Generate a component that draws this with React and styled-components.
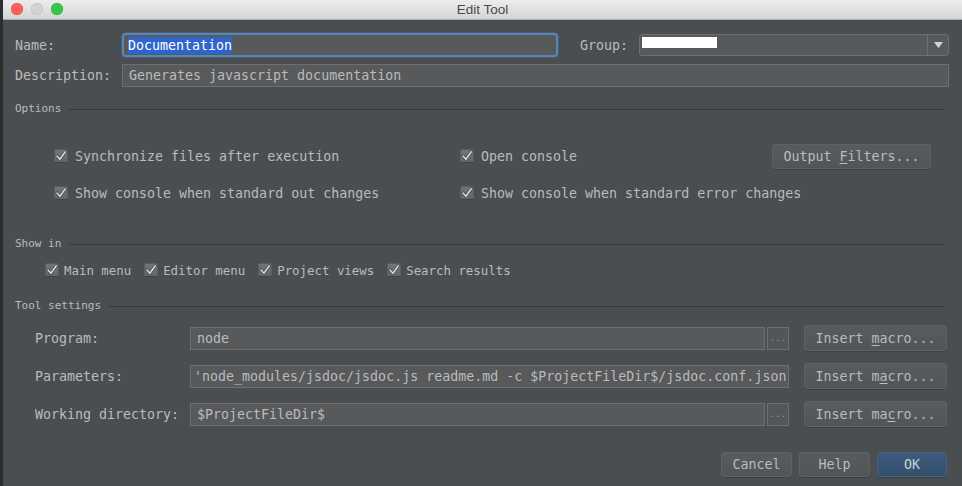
import React from 'react';
import styled, { createGlobalStyle } from 'styled-components';

const GlobalStyle = createGlobalStyle`
  html, body {
    margin: 0;
    padding: 0;
    background: #2b2d2e;
  }
  body {
    font-family: "DejaVu Sans Mono", "Liberation Mono", monospace;
  }
`;

const Screen = styled.div`
  width: 962px;
  height: 486px;
  display: flex;
  overflow: hidden;
  background: #2b2d2e;
`;

const Window = styled.div`
  margin-left: 3px;
  flex: 1;
  min-width: 0;
  display: flex;
  flex-direction: column;
  background: #4b4e50;
  color: #bbbbbb;
  font-size: 13.3px;
`;

const TitleBar = styled.div`
  height: 19px;
  flex: 0 0 19px;
  position: relative;
  display: flex;
  align-items: center;
  justify-content: center;
  background: linear-gradient(#ececec, #d5d5d5);
  border-bottom: 1px solid #a9a9a9;
  font-family: "Liberation Sans", Arial, sans-serif;
  font-size: 13.5px;
  color: #4a4a4a;
`;

const Lights = styled.div`
  position: absolute;
  left: 8px;
  top: 3px;
  display: flex;
  gap: 8px;
`;

const Light = styled.span`
  width: 12px;
  height: 12px;
  border-radius: 50%;
  background: ${p => p.color};
  box-shadow: inset 0 0 0 0.5px ${p => p.edge};
`;

const Body = styled.div`
  flex: 1;
  min-width: 0;
  display: flex;
  flex-direction: column;
  padding: 0 13px 0 12px;
`;

const FieldRow = styled.div`
  display: flex;
  align-items: center;
  height: ${p => p.h || 23}px;
  margin-top: ${p => p.mt || 0}px;
  min-width: 0;
`;

const Label = styled.div`
  flex: 0 0 ${p => p.w}px;
  margin-left: ${p => p.ml || 0}px;
  white-space: nowrap;
`;

const TextBox = styled.div`
  box-sizing: border-box;
  flex: ${p => (p.w ? `0 0 ${p.w}px` : '1 1 0')};
  min-width: 0;
  height: ${p => p.h || 23}px;
  display: flex;
  align-items: center;
  padding: 0 6px;
  background: #57595b;
  border: 1px solid #6d7072;
  color: #bbbbbb;
  white-space: nowrap;
  overflow: hidden;
`;

const FocusBox = styled(TextBox)`
  border: 2px solid #5b85b3;
  border-radius: 4px;
  padding: 0 4px;
  box-shadow: 0 0 0 1px #46607c;
`;

const Selected = styled.span`
  background: #2f65ca;
  color: #ffffff;
  line-height: 17px;
`;

const Combo = styled.div`
  box-sizing: border-box;
  flex: 1 1 0;
  min-width: 0;
  height: 22px;
  display: flex;
  background: #57595b;
  border: 1px solid #6d7072;
  border-radius: 3px;
`;

const ComboValue = styled.div`
  flex: 1;
  padding: 2px 0 0 2px;
`;

const Redacted = styled.div`
  width: 75px;
  height: 11px;
  background: #ffffff;
`;

const ComboArrow = styled.div`
  flex: 0 0 20px;
  border-left: 1px solid #6d7072;
  display: flex;
  align-items: center;
  justify-content: center;
`;

const SectionTitle = styled.div`
  display: flex;
  align-items: center;
  height: 14px;
  margin-top: ${p => p.mt}px;
  font-size: 11px;
  margin-right: 4px;

  &::after {
    content: '';
    flex: 1;
    height: 1px;
    margin: 3px 0 0 8px;
    background: #36383a;
  }
`;

const OptionsGrid = styled.div`
  display: grid;
  grid-template-columns: 406px minmax(0, 1fr) auto;
  grid-auto-rows: 26px;
  row-gap: 11px;
  align-items: center;
  margin-top: 28px;
  padding: 0 18px 0 39px;
`;

const ShowInRow = styled.div`
  display: flex;
  align-items: center;
  height: 20px;
  margin-top: 10px;
  padding-left: 30px;
  gap: 13px;
  font-size: 12.4px;
`;

const Check = styled.label`
  display: flex;
  align-items: center;
  gap: ${p => p.gap || 7}px;
  white-space: nowrap;
`;

const Box = styled.span`
  box-sizing: border-box;
  width: 14px;
  height: 14px;
  flex: 0 0 14px;
  border-radius: 2px;
  background: linear-gradient(#727577, #636668);
  border: 1px solid #5a5d5f;
  border-bottom-color: #3f4143;
  display: flex;
  align-items: center;
  justify-content: center;
`;

const Button = styled.button`
  box-sizing: border-box;
  height: ${p => p.h || 25}px;
  width: ${p => p.w}px;
  flex: 0 0 ${p => p.w}px;
  margin-left: ${p => p.ml || 0}px;
  padding: 0;
  font-family: inherit;
  font-size: 13.3px;
  color: ${p => (p.primary ? '#c8d0d8' : '#bbbbbb')};
  background: ${p =>
    p.primary
      ? 'linear-gradient(#3d5b7b, #34506e)'
      : 'linear-gradient(#595c5e, #525557)'};
  border: 1px solid ${p => (p.primary ? '#44617f' : '#5f6264')};
  border-radius: 3px;
  box-shadow: 0 1px 0 rgba(0, 0, 0, 0.15);

  u {
    text-decoration-thickness: 1px;
    text-underline-offset: 2px;
  }
`;

const Dots = styled.div`
  box-sizing: border-box;
  flex: 0 0 22px;
  height: 23px;
  margin-left: 2px;
  border: 1px solid #6d7072;
  background: #535658;
  color: #9a9a9a;
  font-size: 9px;
  display: flex;
  align-items: center;
  justify-content: center;
`;

const ToolRow = styled(FieldRow)`
  padding-left: 20px;
  padding-right: 2px;
  height: 26px;
`;

const Footer = styled.div`
  display: flex;
  justify-content: flex-end;
  gap: 7px;
  margin-top: 25px;
  padding-right: 2px;
`;

const CheckMark = () => (
  <svg width="12" height="12" viewBox="0 0 12 12">
    <path d="M2 6 L4.9 9.3 L10.3 1.8" fill="none" stroke="#3a3c3e" strokeWidth="2.8" strokeLinecap="round" strokeLinejoin="round" />
    <path d="M2 6 L4.9 9.3 L10.3 1.8" fill="none" stroke="#dcdcdc" strokeWidth="1.6" strokeLinecap="round" strokeLinejoin="round" />
  </svg>
);

const CheckItem = ({ children, gap }) => (
  <Check gap={gap}>
    <Box>
      <CheckMark />
    </Box>
    <span>{children}</span>
  </Check>
);

const macroButton = letter => {
  const text = 'Insert macro...';
  const i = text.indexOf(letter, 7);
  return (
    <Button w={143} h={26} ml={15}>
      {text.slice(0, i)}
      <u>{text[i]}</u>
      {text.slice(i + 1)}
    </Button>
  );
};

const App = () => (
  <>
    <GlobalStyle />
    <Screen>
      <Window>
        <TitleBar>
          <Lights>
            <Light color="#fc605c" edge="#de4b47" />
            <Light color="#d3d3d3" edge="#b9b9b9" />
            <Light color="#34c84a" edge="#2aa83c" />
          </Lights>
          Edit Tool
        </TitleBar>
        <Body>
          <FieldRow h={24} mt={13}>
            <Label w={107}>Name:</Label>
            <FocusBox w={436} h={24}>
              <Selected>Documentation</Selected>
            </FocusBox>
            <Label w={59} ml={22}>Group:</Label>
            <Combo>
              <ComboValue>
                <Redacted />
              </ComboValue>
              <ComboArrow>
                <svg width="9" height="6" viewBox="0 0 9 6">
                  <path d="M0 0 H9 L4.5 6 Z" fill="#d4d4d4" />
                </svg>
              </ComboArrow>
            </Combo>
          </FieldRow>
          <FieldRow mt={7}>
            <Label w={107}>Description:</Label>
            <TextBox>Generates javascript documentation</TextBox>
          </FieldRow>

          <SectionTitle mt={14}>Options</SectionTitle>
          <OptionsGrid>
            <CheckItem>Synchronize files after execution</CheckItem>
            <CheckItem>Open console</CheckItem>
            <Button w={159}>
              Output <u>F</u>ilters...
            </Button>
            <CheckItem>Show console when standard out changes</CheckItem>
            <CheckItem>Show console when standard error changes</CheckItem>
          </OptionsGrid>

          <SectionTitle mt={30}>Show in</SectionTitle>
          <ShowInRow>
            <CheckItem gap={5}>Main menu</CheckItem>
            <CheckItem gap={5}>Editor menu</CheckItem>
            <CheckItem gap={5}>Project views</CheckItem>
            <CheckItem gap={5}>Search results</CheckItem>
          </ShowInRow>

          <SectionTitle mt={18}>Tool settings</SectionTitle>
          <ToolRow mt={13}>
            <Label w={155}>Program:</Label>
            <TextBox>node</TextBox>
            <Dots>...</Dots>
            {macroButton('m')}
          </ToolRow>
          <ToolRow mt={12}>
            <Label w={155}>Parameters:</Label>
            <TextBox style={{ paddingLeft: 3 }}>
              'node_modules/jsdoc/jsdoc.js readme.md -c $ProjectFileDir$/jsdoc.conf.json
            </TextBox>
            {macroButton('a')}
          </ToolRow>
          <ToolRow mt={12}>
            <Label w={155}>Working directory:</Label>
            <TextBox>$ProjectFileDir$</TextBox>
            <Dots>...</Dots>
            {macroButton('c')}
          </ToolRow>

          <Footer>
            <Button w={71}>Cancel</Button>
            <Button w={71}>Help</Button>
            <Button w={70} primary>
              OK
            </Button>
          </Footer>
        </Body>
      </Window>
    </Screen>
  </>
);

export default App;
